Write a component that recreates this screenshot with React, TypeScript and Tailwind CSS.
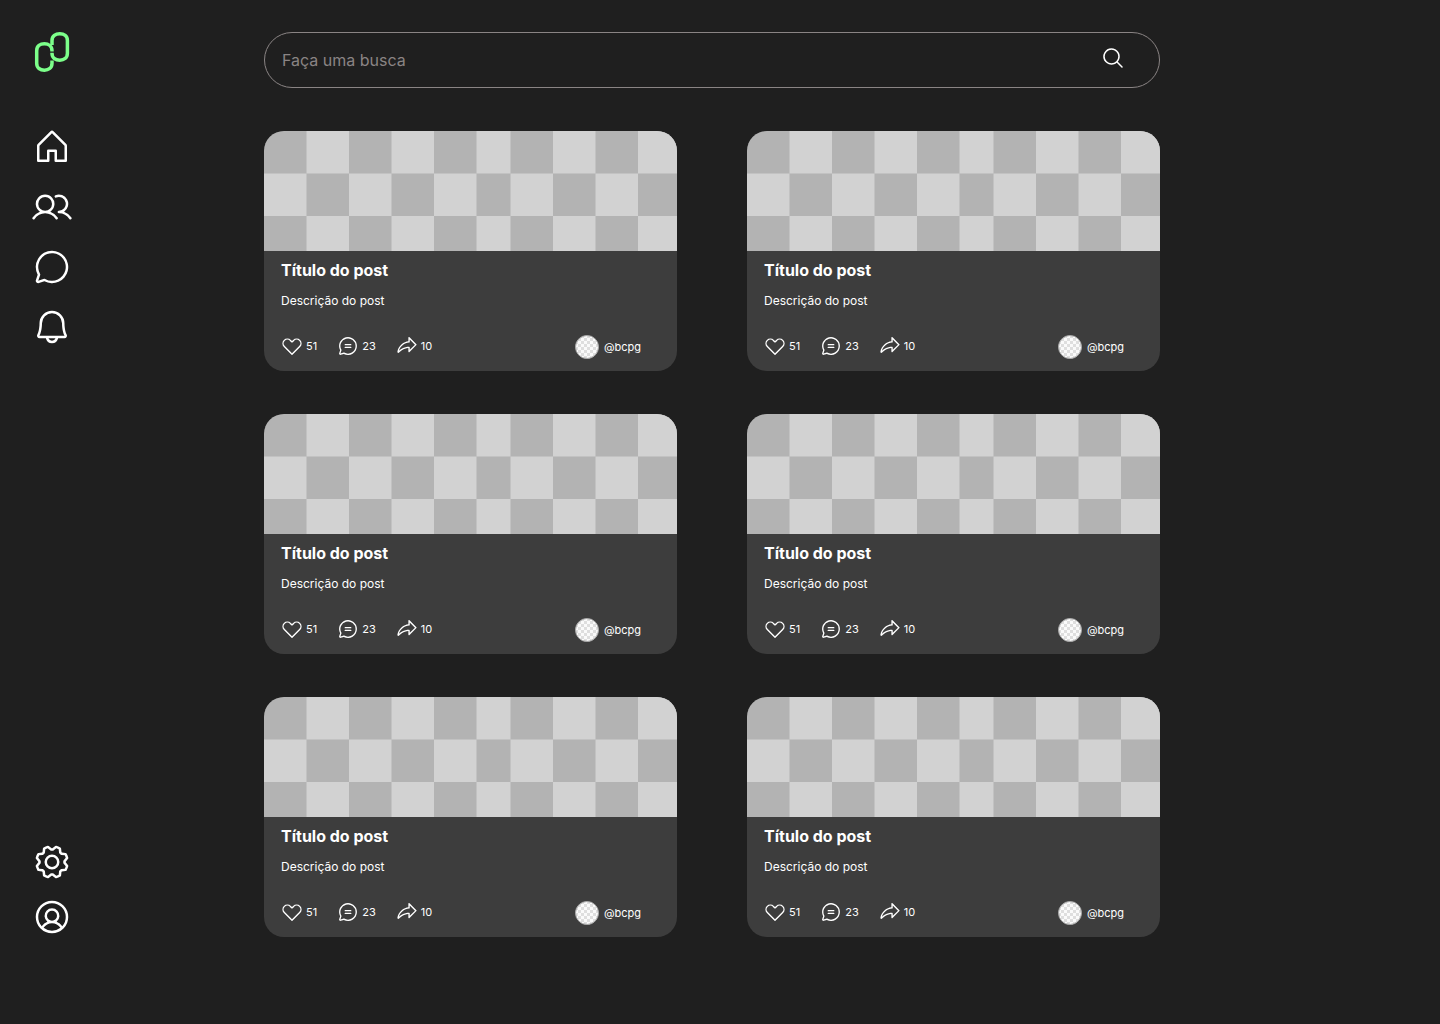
import type { ReactNode } from "react";
import {
  PiBell,
  PiChatCircle,
  PiChatCircleText,
  PiGear,
  PiHeartStraight,
  PiHouse,
  PiMagnifyingGlass,
  PiShareFat,
  PiUserCircle,
  PiUsers,
} from "react-icons/pi";

function Logo() {
  return (
    <svg width="40" height="40" viewBox="0 0 40 40" fill="none" stroke="#7cff8a" strokeWidth="3.5" aria-hidden="true">
      <path d="M20 19.600V18.700C20 14 16.500 11.800 12.400 11.800S4.700 14 4.700 18.700v12.600C4.700 36 8.300 38.200 12.400 38.200S20 36 20 31.300V28.500" />
      <path d="M20 13V8.600C20 4 23.600 1.800 27.800 1.800S35.400 4 35.400 8.600v12.700C35.400 26 32 28.200 27.800 28.200S20 26 20 21.300v-.600" />
    </svg>
  );
}

const columns = [0, 42.5, 85, 127.5, 170, 212.5, 246.5, 289, 331.5, 374, 413];
const rows = [0, 42.5, 85, 120];

function Cover() {
  return (
    <svg className="block h-30 w-full" viewBox="0 0 413 120" preserveAspectRatio="none" aria-hidden="true">
      <rect width="413" height="120" fill="#b3b3b3" />
      {rows.slice(0, -1).map((y, r) =>
        columns.slice(0, -1).map((x, c) =>
          (r + c) % 2 === 1 ? (
            <rect key={`${r}-${c}`} x={x} y={y} width={columns[c + 1] - x} height={rows[r + 1] - y} fill="#d2d2d2" />
          ) : null,
        ),
      )}
    </svg>
  );
}

function Avatar() {
  return (
    <svg width="24" height="24" viewBox="0 0 24 24" aria-hidden="true">
      <defs>
        <pattern id="avatar-check" width="6" height="6" patternUnits="userSpaceOnUse">
          <rect width="6" height="6" fill="#fafafa" />
          <rect width="3" height="3" fill="#dedede" />
          <rect x="3" y="3" width="3" height="3" fill="#dedede" />
        </pattern>
      </defs>
      <circle cx="12" cy="12" r="11.500" fill="url(#avatar-check)" stroke="#a8a8a8" />
    </svg>
  );
}

function NavLink({ label, children }: { label: string; children: ReactNode }) {
  return (
    <a href="#" aria-label={label} className="block">
      {children}
    </a>
  );
}

function Action({ label, count, children }: { label: string; count: number; children: ReactNode }) {
  return (
    <button type="button" aria-label={`${label}: ${count}`} className="flex items-center gap-[3px]">
      {children}
      <span className="text-[11px] leading-4">{count}</span>
    </button>
  );
}

function PostCard() {
  return (
    <article className="overflow-hidden rounded-[20px] bg-[#3d3d3d] text-white">
      <Cover />
      <div className="pt-[7px] pb-3 pl-[17px]">
        <h2 className="text-base leading-6 font-bold">Título do post</h2>
        <p className="mt-[9px] text-xs leading-5">Descrição do post</p>
        <div className="mt-6 flex h-6 items-center justify-between pr-9">
          <div className="flex items-center gap-5 pb-0.5">
            <Action label="Curtir" count={51}>
              <PiHeartStraight size={22} />
            </Action>
            <Action label="Comentar" count={23}>
              <PiChatCircleText size={22} />
            </Action>
            <Action label="Compartilhar" count={10}>
              <PiShareFat size={22} />
            </Action>
          </div>
          <a href="#" className="flex items-center gap-[5px] text-[11px] leading-4">
            <Avatar />
            @bcpg
          </a>
        </div>
      </div>
    </article>
  );
}

export default function App() {
  return (
    <div className="flex min-h-screen bg-[#1f1f1f] font-['Inter',sans-serif] text-white">
      <aside className="flex w-26 shrink-0 flex-col items-center justify-between pt-8 pb-[87px]">
        <div className="flex flex-col items-center gap-[55px]">
          <a href="#" aria-label="Início">
            <Logo />
          </a>
          <nav aria-label="Principal" className="flex flex-col gap-5">
            <NavLink label="Página inicial"><PiHouse size={40} /></NavLink>
            <NavLink label="Amigos"><PiUsers size={40} /></NavLink>
            <NavLink label="Mensagens"><PiChatCircle size={40} /></NavLink>
            <NavLink label="Notificações"><PiBell size={40} /></NavLink>
          </nav>
        </div>
        <nav aria-label="Conta" className="flex flex-col gap-[15px]">
          <NavLink label="Configurações"><PiGear size={40} /></NavLink>
          <NavLink label="Perfil"><PiUserCircle size={40} /></NavLink>
        </nav>
      </aside>
      <main className="grow pt-8 pb-20 pl-40">
        <div className="max-w-4xl">
          <form role="search" className="flex h-14 items-center rounded-full border border-[#8a8484] pr-[34px] pl-[17px]">
            <input
              type="search"
              aria-label="Faça uma busca"
              placeholder="Faça uma busca"
              className="min-w-0 grow bg-transparent text-base outline-none placeholder:text-[#8a8484]"
            />
            <button type="button" aria-label="Buscar" className="pb-1">
              <PiMagnifyingGlass size={24} />
            </button>
          </form>
          <div className="mt-[43px] grid grid-cols-2 gap-x-[70px] gap-y-[43px]">
            {[1, 2, 3, 4, 5, 6].map((id) => (
              <PostCard key={id} />
            ))}
          </div>
        </div>
      </main>
    </div>
  );
}
